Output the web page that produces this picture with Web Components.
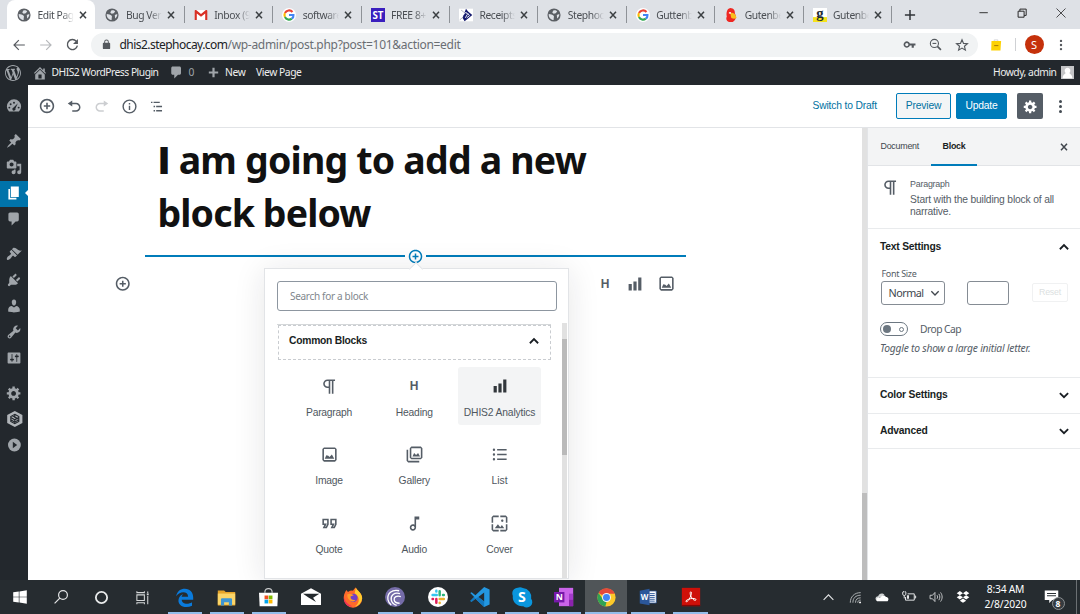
<!DOCTYPE html>
<html lang="en">
<head>
<meta charset="utf-8">
<title>Edit Page</title>
<style>
html,body{margin:0;height:100%;overflow:hidden;background:#fff}
body{font-family:"Noto Sans","Open Sans",sans-serif}
</style>
</head>
<body>
<desktop-screen></desktop-screen>
<script>
const ICONS = {
  globe:['0 0 20 20','<circle cx="10" cy="10" r="9.4" fill="#5b5f64"/><path fill="#dee1e6" d="M2.500 8.500C5 9 8 9 9.500 11s-1 3 .5 5.500L8 17C5 16 2 13 2.500 8.500zM9 3.500c2.500-.8 4.500.2 5.500 1.500l-2 2.500-3 .8-2-2zM14 10l3.500-1.500c.4 3-1.500 5.500-3 6.500z"/>'],
  gmail:['0 0 20 20','<path fill="#fff" d="M2 3h16v14H2z"/><path fill="#d93025" d="M1 17V4.200C1 3 2.500 2.500 3.500 3.300L10 8.500l6.500-5.200c1-.8 2.500-.3 2.500 1V17h-3V8l-6 4.600L4 8v9z"/>'],
  google:['0 0 20 20','<circle cx="10" cy="10" r="10" fill="#fff"/><g fill="none" stroke-width="3"><path stroke="#ea4335" d="M15 5.700A6.500 6.500 0 0 0 4.200 7.200"/><path stroke="#fbbc05" d="M4.200 7.200a6.500 6.500 0 0 0 0 5.700"/><path stroke="#34a853" d="M4.200 12.900a6.500 6.500 0 0 0 9.800 2.300"/><path stroke="#4285f4" d="M14 15.200c1.800-1.300 2.600-3.300 2.400-5.200H10"/></g>'],
  st:['0 0 20 20','<path fill="#3a1fbe" d="M0 0h20v20H0z"/><text x="10" y="15" font-family="Open Sans" font-weight="700" font-size="14" text-anchor="middle" fill="#fff">ST</text>'],
  receipt:['0 0 20 20','<path fill="#fff" d="M0 1h20v18H0z"/><path fill="#14196e" d="M10 1l3 4 6 5-6 5-5 4-3-5 2-5z"/><path stroke="#fff" stroke-width="1.300" fill="none" d="M6 10l4-4 2 3-3 5M12 7l3 4-4 3"/><path stroke="#99a" d="M1 17l5-4M3 3l4 3"/>'],
  parrot:['0 0 20 20','<path fill="#ee2722" d="M9 0c5 0 7 4 6.500 8 3 5 1 10-3 12H7c-4-2-4.500-5-3-8C3 7 4 1 9 0z"/><path fill="#f9bd1a" d="M9 7c4-1 8 2 9 7-3 3-8 1-8-1z"/><path fill="#fff" d="M7 6h3v2H7z"/>'],
  gg:['0 0 20 20','<path fill="#fff" d="M0 0h20v20H0z"/><path fill="#f5e21c" d="M0 13h20v7H0z"/><text x="10" y="14.500" font-family="Liberation Serif" font-weight="700" font-size="21" text-anchor="middle" fill="#1c2a33">g</text>'],
  x:['0 0 20 20','<path stroke="currentColor" stroke-width="3" d="M4 3.500l12 13M16 3.500L4 16.500"/>'],
  plus:['0 0 20 20','<path stroke="currentColor" stroke-width="2.500" d="M10 1.500v17M1.500 10h17"/>'],
  plusb:['0 0 20 20','<path stroke="currentColor" stroke-width="4" d="M10 1.500v17M1.500 10h17"/>'],
  min:['0 0 20 20','<path stroke="currentColor" stroke-width="1.500" d="M4 9.500h14"/>'],
  restore:['0 0 20 20','<path fill="none" stroke="currentColor" stroke-width="1.600" d="M3.500 7h10v10h-10zM6.500 7V3.500H17V14h-3.500"/>'],
  close:['0 0 20 20','<path stroke="currentColor" stroke-width="1.300" d="M2.500 2.500l15 15M17.500 2.500l-15 15"/>'],
  back:['0 0 24 24','<path fill="currentColor" d="M22 11H5.800l6.600-6.600L11 3l-9 9 9 9 1.400-1.400L5.800 13H22z"/>'],
  fwd:['0 0 24 24','<path fill="currentColor" d="M2 11h16.200l-6.600-6.600L13 3l9 9-9 9-1.400-1.400 6.600-6.600H2z"/>'],
  reload:['0 0 24 24','<path fill="none" stroke="currentColor" stroke-width="2.500" d="M19 6a9.300 9.300 0 1 0 2 8"/><path fill="currentColor" d="M22 2v9h-9z"/>'],
  lock:['0 0 24 24','<path fill="currentColor" d="M18 8h-1V6A5 5 0 0 0 7 6v2H6a2 2 0 0 0-2 2v10c0 1.100.9 2 2 2h12a2 2 0 0 0 2-2V10a2 2 0 0 0-2-2zM9 6a3 3 0 0 1 6 0v2H9z"/>'],
  key:['0 0 24 24','<path fill="currentColor" fill-rule="evenodd" d="M12.700 10a6 6 0 1 0 0 4H16v4h4v-4h3v-4zM7 15a3 3 0 1 1 0-6 3 3 0 0 1 0 6z"/>'],
  zoomout:['0 0 24 24','<g fill="none" stroke="currentColor" stroke-width="2"><circle cx="10" cy="10" r="7.500"/><path d="M15.500 15.500L22 22" stroke-width="3"/><path d="M6.500 10h7"/></g>'],
  star:['0 0 24 24','<path fill="none" stroke="currentColor" stroke-width="2" d="M12 3l2.600 6.200 6.700.6-5.100 4.400 1.600 6.600-5.800-3.500-5.800 3.500 1.600-6.600-5.100-4.400 6.700-.6z"/>'],
  keep:['0 0 20 20','<path fill="none" stroke="#b9bdc2" d="M7 4V1.500h6V4"/><path fill="#fdd204" d="M2.500 3.500h16l-1 15.500H2z"/><path stroke="#a67408" stroke-width="1.600" d="M7 11h7"/>'],
  dots:['0 0 20 20','<g fill="currentColor"><circle cx="10" cy="3.200" r="2"/><circle cx="10" cy="10" r="2"/><circle cx="10" cy="16.800" r="2"/></g>'],
  wp:['0 0 20 20','<path fill="currentColor" d="M20 10c0-5.510-4.490-10-10-10C4.480 0 0 4.490 0 10c0 5.520 4.480 10 10 10 5.510 0 10-4.480 10-10zM7.780 15.370L4.370 6.220c.55-.02 1.170-.08 1.170-.08.5-.06.44-1.130-.06-1.110 0 0-1.450.11-2.370.11-.18 0-.37 0-.58-.01C4.120 2.690 6.870 1.110 10 1.110c2.330 0 4.450.87 6.050 2.340-.68-.11-1.650.39-1.650 1.580 0 .74.45 1.360.9 2.100.35.61.55 1.360.55 2.460 0 1.490-1.400 5-1.400 5l-3.030-8.370c.54-.02.82-.17.82-.17.5-.05.44-1.250-.06-1.220 0 0-1.440.12-2.380.12-.87 0-2.330-.12-2.330-.12-.5-.03-.56 1.200-.06 1.220l.92.08 1.260 3.410zM17.410 10c.24-.64.74-1.870.43-4.250.7 1.290 1.050 2.710 1.050 4.250 0 3.290-1.730 6.240-4.400 7.780.97-2.590 1.940-5.200 2.920-7.780zM6.100 18.090C3.120 16.650 1.110 13.530 1.110 10c0-1.300.23-2.480.72-3.590C3.250 10.300 4.670 14.200 6.100 18.090zm4.030-6.630l2.580 6.980c-.86.29-1.760.45-2.710.45-.79 0-1.570-.11-2.290-.33.81-2.380 1.620-4.740 2.420-7.100z"/>'],
  home:['0 0 20 20','<path fill="currentColor" d="M16 8.500l1.530 1.530-1.060 1.060L10 4.600l-6.470 6.490-1.060-1.060L10 2.500l4 4v-2h2v4zm-6-2.460l6 5.990V18H4v-5.970zM12 17v-5H8v5h4z"/>'],
  comment:['0 0 20 20','<path fill="currentColor" d="M5 2h9c1.100 0 2 .9 2 2v7c0 1.100-.9 2-2 2h-2l-5 5v-5H5c-1.100 0-2-.9-2-2V4c0-1.100.9-2 2-2z"/>'],
  avatar:['0 0 20 20','<path fill="#c3c4c6" d="M0 0h20v20H0z"/><path fill="#fff" d="M10 2.500a4.500 4.800 0 0 1 3 8.300c.3 1.700 4.500 2.200 4.500 8.200h-15c0-6 4.200-6.500 4.500-8.200a4.500 4.800 0 0 1 3-8.300z"/>'],
  dashboard:['0 0 20 20','<path fill="currentColor" d="M3.800 17h12.400A8.900 8.900 0 1 0 3.800 17z"/><g fill="#23282d"><circle cx="10" cy="6" r="1.200"/><circle cx="5.800" cy="7.800" r="1.200"/><circle cx="4.200" cy="12" r="1.200"/><circle cx="15.800" cy="12" r="1.200"/><path d="M14.800 6.500l-3 6.600a2 2 0 1 1-2.300-1.200z"/></g>'],
  pin:['0 0 20 20','<path fill="currentColor" d="M10.440 3.020l1.820-1.820 6.360 6.350-1.830 1.820c-1.050-.68-2.480-.57-3.410.36l-.75.75c-.92.93-1.040 2.350-.35 3.410l-1.830 1.820-2.410-2.410-2.800 2.790c-.42.42-3.380 2.710-3.800 2.290s1.860-3.390 2.280-3.810l2.790-2.790L4.100 9.360l1.830-1.820c1.050.69 2.480.57 3.400-.36l.75-.75c.93-.92 1.050-2.350.36-3.410z"/>'],
  media:['0 0 20 20','<path fill="currentColor" d="M13 11V4c0-.55-.45-1-1-1h-1.670L9 1H5L3.670 3H2c-.55 0-1 .45-1 1v7c0 .55.45 1 1 1h10c.55 0 1-.45 1-1zM7 4.500c1.380 0 2.500 1.120 2.500 2.500S8.380 9.500 7 9.500 4.500 8.380 4.500 7 5.620 4.500 7 4.500zM14 6h5v10.500c0 1.380-1.120 2.500-2.500 2.500S14 17.880 14 16.500s1.120-2.500 2.500-2.500c.17 0 .34.02.5.05V9h-3V6zm-4 8.050V13h2v3.500c0 1.380-1.120 2.500-2.500 2.500S7 17.880 7 16.500 8.120 14 9.500 14c.17 0 .34.02.5.05z"/>'],
  page:['0 0 20 20','<path fill="currentColor" d="M6 15V2h10v13H6zm-1 1h8v2H3V5h2v11z"/>'],
  brush:['0 0 20 20','<path fill="currentColor" d="M14.480 11.060L7.410 3.990l1.500-1.500c.5-.56 2.300-.47 3.510.32 1.210.8 1.430 1.280 2.910 2.100 1.180.64 2.450 1.260 4.450.85zm-.71.71L6.700 4.700 4.930 6.470c-.39.39-.39 1.020 0 1.410l1.060 1.060c.39.39.39 1.030 0 1.420-.6.6-1.430 1.110-2.210 1.690-.35.26-.7.53-1.010.84C1.430 14.230.4 16.080 1.400 17.070c.99 1 2.840-.03 4.180-1.360.31-.31.58-.66.85-1.020.57-.78 1.080-1.610 1.690-2.210.39-.39 1.020-.39 1.410 0l1.060 1.060c.39.39 1.020.39 1.410 0z"/>'],
  plug:['0 0 20 20','<path fill="currentColor" d="M13.110 4.360L9.870 7.600 8 5.730l3.240-3.240c.35-.34 1.050-.2 1.560.32.52.51.66 1.210.31 1.550zm-8 1.770l.91-1.120 9.010 9.010-1.190.84c-.71.71-2.630 1.160-3.820 1.160H6.140L4.900 17.260c-.59.59-1.540.59-2.120 0-.59-.58-.59-1.530 0-2.120l1.240-1.240v-3.880c0-1.130.4-3.190 1.090-3.890zm7.260 3.970l3.240-3.240c.34-.35 1.040-.21 1.550.31.52.51.66 1.210.31 1.550l-3.240 3.250z"/>'],
  user:['0 0 20 20','<path fill="currentColor" d="M10 9.250c-2.270 0-2.730-3.440-2.730-3.440C7 4.020 7.820 2 9.970 2c2.160 0 2.980 2.020 2.710 3.810 0 0-.41 3.440-2.680 3.440zm0 2.570L12.720 10c2.390 0 4.520 2.330 4.520 4.530v2.490s-3.650 1.130-7.240 1.130c-3.650 0-7.240-1.130-7.240-1.130v-2.490c0-2.250 1.940-4.480 4.470-4.480z"/>'],
  wrench:['0 0 20 20','<path fill="currentColor" d="M16.680 9.770c-1.340 1.340-3.300 1.670-4.950.99l-5.410 6.520c-.99.99-2.590.99-3.580 0s-.99-2.590 0-3.570l6.520-5.420c-.68-1.650-.35-3.610.99-4.950 1.280-1.280 3.120-1.620 4.720-1.060l-2.890 2.890 2.820 2.820 2.860-2.870c.53 1.580.18 3.390-1.080 4.650zM3.810 16.210c.4.39 1.040.39 1.430 0 .4-.4.4-1.040 0-1.430-.39-.4-1.030-.4-1.430 0-.39.39-.39 1.030 0 1.430z"/>'],
  sliders:['0 0 20 20','<path fill="currentColor" d="M18 16V4c0-.55-.45-1-1-1H3c-.55 0-1 .45-1 1v12c0 .55.45 1 1 1h14c.55 0 1-.45 1-1zM8 11h1c.55 0 1 .45 1 1s-.45 1-1 1H8v1.500c0 .28-.22.5-.5.5s-.5-.22-.5-.5V13H6c-.55 0-1-.45-1-1s.45-1 1-1h1V5.500c0-.28.22-.5.5-.5s.5.22.5.5V11zm5-2h-1c-.55 0-1-.45-1-1s.45-1 1-1h1V5.500c0-.28.22-.5.5-.5s.5.22.5.5V7h1c.55 0 1 .45 1 1s-.45 1-1 1h-1v5.500c0 .28-.22.5-.5.5s-.5-.22-.5-.5V9z"/>'],
  gear:['0 0 20 20','<path fill="currentColor" d="M18 12h-2.180c-.17.7-.44 1.350-.81 1.930l1.540 1.540-2.100 2.100-1.540-1.540c-.58.36-1.230.63-1.910.79V19H8v-2.180c-.68-.16-1.330-.43-1.910-.79l-1.540 1.540-2.120-2.120 1.540-1.540c-.36-.58-.63-1.230-.79-1.910H1V9.030h2.170c.16-.7.44-1.350.8-1.940L2.430 5.550l2.100-2.100 1.540 1.540c.58-.37 1.240-.64 1.930-.81V2h3v2.180c.68.16 1.330.43 1.910.79l1.540-1.540 2.120 2.120-1.540 1.540c.36.59.64 1.240.8 1.940H18V12zm-8.500 1.500c1.660 0 3-1.340 3-3s-1.340-3-3-3-3 1.340-3 3 1.340 3 3 3z"/>'],
  hex:['0 0 20 20','<path fill="#b1b5b9" d="M11 0l9.500 5v10L11 20l-9.500-5V5z"/><path fill="none" stroke="#23282d" stroke-width="1.400" d="M11 4.200l5 2.800v6l-5 2.800L6 13V7zM6 8l5 3 5-3M6 11l5 3 5-3M11 4v4l4 2M8 6l6 3M11 11v4"/>'],
  play:['0 0 20 20','<circle cx="10.500" cy="10" r="8" fill="currentColor"/><path fill="#23282d" d="M8.500 6L14 10l-5.500 4z"/>'],
  insert:['0 0 20 20','<path fill="currentColor" d="M10 1c-5 0-9 4-9 9s4 9 9 9 9-4 9-9-4-9-9-9zm0 16c-3.900 0-7-3.100-7-7s3.100-7 7-7 7 3.100 7 7-3.100 7-7 7zm1-11H9v3H6v2h3v3h2v-3h3V9h-3V6z"/>'],
  undo:['0 0 20 20','<path fill="currentColor" d="M12 5H7V2L1 6l6 4V7h5c2.200 0 4 1.800 4 4s-1.800 4-4 4H7v2h5c3.300 0 6-2.700 6-6s-2.700-6-6-6z"/>'],
  redo:['0 0 20 20','<path fill="currentColor" d="M8 5h5V2l6 4-6 4V7H8c-2.200 0-4 1.800-4 4s1.800 4 4 4h5v2H8c-3.300 0-6-2.700-6-6s2.700-6 6-6z"/>'],
  info:['0 0 24 24','<path fill="currentColor" d="M12 2a10 10 0 1 0 0 20 10 10 0 0 0 0-20zm0 18a8 8 0 1 1 0-16 8 8 0 0 1 0 16zm-1-9h2v6h-2zm0-4h2v2h-2z"/>'],
  outline:['0 0 20 20','<path fill="currentColor" d="M1.500 2.500h2.300v2.200H1.500zm4 0H15v2.200H5.500zM5.500 9h2.300v2.200H5.500zm4 0h9v2.200h-9zM5.500 15.500h2.300v2.200H5.500zm4 0h9v2.200h-9z"/>'],
  para:['0 0 24 24','<path fill="currentColor" d="M11 5v7H9.500C7.600 12 6 10.400 6 8.500S7.600 5 9.500 5H11m8-2H9.500C6.500 3 4 5.500 4 8.500S6.500 14 9.500 14H11v7h2V5h2v16h2V5h2V3z"/>'],
  heading:['0 0 20 20','<text x="10" y="15.300" font-family="Liberation Sans" font-weight="700" font-size="15" text-anchor="middle" fill="currentColor">H</text>'],
  bars:['0 0 20 20','<path fill="currentColor" d="M18 18V2h-4v16h4zm-6 0V7H8v11h4zm-6 0v-8H2v8h4z"/>'],
  image:['0 0 24 24','<path fill="currentColor" d="M19 3H5L3 5v14l2 2h14l2-2V5l-2-2zm0 16H5V5h14v14zM8 13l-2 4.500h12l-3-5.500-3 3-1.500-1.500z" fill-rule="evenodd"/>'],
  gallery:['0 0 24 24','<path fill="currentColor" d="M20 4v12H8V4h12m0-2H8L6 4v12l2 2h12l2-2V4l-2-2zm-8.500 8l-2 4.500h9.500l-2.500-4.500-2.500 2.500zM2 6v14l2 2h14v-2H4V6H2z"/>'],
  list:['0 0 24 24','<path fill="currentColor" d="M9 19h12v-2H9v2zm0-6h12v-2H9v2zm0-8v2h12V5H9zM5 4.500a1.500 1.500 0 1 0 0 3 1.500 1.500 0 0 0 0-3zm0 6a1.500 1.500 0 1 0 0 3 1.500 1.500 0 0 0 0-3zm0 6a1.500 1.500 0 1 0 0 3 1.500 1.500 0 0 0 0-3z"/>'],
  quote:['0 0 24 24','<path fill="currentColor" d="M18.620 18h-5.240l2-4H13V6h8v7.240L18.620 18zm-2-2h.76L19 12.760V8h-4v4h3.620l-2 4zm-8 2H3.380l2-4H3V6h8v7.240L8.620 18zm-2-2h.76L9 12.760V8H5v4h3.620l-2 4z"/>'],
  audio:['0 0 24 24','<path fill="currentColor" d="M12 3l.01 10.550c-.59-.34-1.270-.55-2-.55C7.790 13 6 14.790 6 17s1.790 4 4.010 4S14 19.210 14 17V7h4V3h-6zm-1.990 16c-1.100 0-2-.9-2-2s.9-2 2-2 2 .9 2 2-.9 2-2 2z"/>'],
  cover:['0 0 24 24','<path fill="currentColor" d="M4 4h7V2H4L2 4v7h2V4zm6 9l-4 5h12l-3-4-2.030 2.710L10 13zm7-4.500c0-.83-.67-1.500-1.500-1.500S14 7.670 14 8.500s.67 1.500 1.500 1.500S17 9.330 17 8.500zM20 2h-7v2h7v7h2V4l-2-2zm0 18h-7v2h7l2-2v-7h-2v7zM4 13H2v7l2 2h7v-2H4v-7z"/>'],
  up:['0 0 24 24','<path fill="none" stroke="currentColor" stroke-width="2.400" d="M6.500 15l5.500-5.500 5.500 5.500"/>'],
  down:['0 0 24 24','<path fill="none" stroke="currentColor" stroke-width="2.400" d="M6.500 9.500L12 15l5.500-5.500"/>'],
  thin:['0 0 24 24','<path fill="none" stroke="currentColor" stroke-width="2" d="M6.500 9.500L12 15l5.500-5.500"/>'],
  windows:['0 0 20 20','<path fill="#fff" d="M1.500 4.200l7-1v6.400h-7zM9.300 3L18.500 1.700v7.900H9.300zM1.500 10.400h7v6.400l-7-1zM9.300 10.400h9.200v7.900L9.300 17z"/>'],
  search:['0 0 20 20','<g fill="none" stroke="#e4e6e7" stroke-width="1.500"><circle cx="12.500" cy="7.500" r="5.500"/><path d="M8.500 11.500L2 18"/></g>'],
  cortana:['0 0 20 20','<circle cx="10" cy="10" r="7.500" fill="none" stroke="#e9ebeb" stroke-width="2.400"/>'],
  taskview:['0 0 20 20','<g fill="none" stroke="#d4d7d8" stroke-width="1.400"><path d="M2.500 6.500h10v7.500h-10zM2.500 1.500v2h10v-2M2.500 19v-2h10v2M17 2v2M17 8v11"/><path stroke-width="2.500" d="M17 4.500v2.500"/></g>'],
  edge:['0 0 24 24','<path fill="#0a7bdc" d="M1.500 10.500C2.500 4 7 1 12.500 1 19 1 23 6 23 12v2.800H8.500c.3 6 8.500 6.200 13 3.200v4.500C12 27 1.500 21.500 5 12.500 6 10 8 8.500 10.500 7.800 9 9 8.500 10 8.400 11h8.200c0-7-10.500-7.500-15.100-.5z"/>'],
  explorer:['0 0 24 24','<path fill="#e6a52a" d="M1 3h8l2 2h12v17H1z"/><path fill="#fbd568" d="M1 7h22v14H1z"/><path fill="#3e96d4" d="M5 22v-8l1-1h12l1 1v8h-4v-4H9v4z"/>'],
  store:['0 0 24 24','<path fill="none" stroke="#c8cacb" stroke-width="1.500" d="M7.500 6V4.500A4 4 0 0 1 12 .8a4 4 0 0 1 4.500 3.700V6"/><path fill="#fff" d="M0 6h24l-.8 17H.8z"/><path fill="#f25022" d="M7 9.500h4.700v4.700H7z"/><path fill="#7fba00" d="M12.300 9.500H17v4.700h-4.700z"/><path fill="#00a4ef" d="M7 14.800h4.700v4.700H7z"/><path fill="#ffb900" d="M12.300 14.800H17v4.700h-4.700z"/>'],
  mail:['0 0 24 24','<path fill="#fff" d="M0 8l12-6.500L24 8v13.500H0z"/><path fill="#23292d" d="M2.500 8H22l-7.500 5 3.500 5L9 12.500z"/>'],
  firefox:['0 0 24 24','<path fill="#ff6a2b" d="M1 12C1 8 3 5.500 4 3.500L6 6c2-1.500 4-2 6-1.500 1-2 2.500-3.500 3.500-4 1 4 7.500 6 7.500 13A11 11 0 0 1 1 14z"/><path fill="#ffcb2e" d="M15.500.5c1 4 7.500 6 7.500 13a11 11 0 0 1-9 10c8-5 5-13 0-16z"/><path fill="#f2305a" d="M1 10c0 6 4 11 10 13-6 2-10-5-10-9z"/><circle cx="12.500" cy="13" r="5" fill="#7040c8"/><path fill="#ff9b2a" d="M5 9c3-2 6-.5 8 1l-4 1.500c0 4 3 4.500 6 4-3 4-10 1-10-6.500z"/>'],
  bt:['0 0 24 24','<circle cx="12" cy="12" r="12" fill="#756ca8"/><g fill="none" stroke="#fff" stroke-width="1.600"><path d="M17 4.500C8 2.500 2.500 8 3.500 15c.5 3 2 5 4 6.500"/><path d="M18 8C11 6 6.500 10 7.500 15.500c.6 3 3 5.500 6.500 6.500"/><path d="M19 11.500c-5-1.500-8.500.5-8 4 .4 2.500 3 4 6.500 4"/></g>'],
  slack:['0 0 24 24','<circle cx="12" cy="12" r="12" fill="#fff"/><g stroke-width="3" stroke-linecap="round"><path stroke="#36c5f0" d="M5.500 9.500h5M10 4.500v1"/><path stroke="#2eb67d" d="M14 5v5M19 9.500h-1"/><path stroke="#ecb22e" d="M14 14.500h5M14 19v.2"/><path stroke="#e01e5a" d="M10 14.500v4.500M5.500 14.500h.5"/></g>'],
  vscode:['0 0 24 24','<path fill="#2397e0" d="M17 0l6.500 3v18L17 24 6.500 14.200 2 17.700l-1.700-1L5 12 .3 7.300l1.700-1 4.500 3.500zM17 6.500L10 12l7 5.500z" fill-rule="evenodd"/><path fill="#1277be" d="M17 17.500V24l-10.500-9.800L10 12zM.3 16.700L5 12l1.500 2.200L2 17.700z"/>'],
  skype:['0 0 24 24','<path fill="#0a96dd" d="M7 .8A7 7 0 0 1 13 1.200a11 11 0 0 1 10 13A6.500 6.500 0 0 1 13.500 23 11 11 0 0 1 1 10.500 6.800 6.800 0 0 1 7 .8z"/><text x="12" y="17.800" font-family="Open Sans" font-size="17" font-weight="700" text-anchor="middle" fill="#fff">S</text>'],
  onenote:['0 0 24 24','<path fill="#ca64ea" d="M6 1h17v22H6z"/><path fill="#a33bcb" d="M18 8h5v7h-5z"/><path fill="#8b22ad" d="M18 15h5v8h-5z"/><path fill="#7719aa" d="M0 6h12.500v12.500H0z"/><text x="6.300" y="16" font-family="Open Sans" font-size="10.500" font-weight="700" text-anchor="middle" fill="#fff">N</text>'],
  chrome:['0 0 24 24','<circle cx="12" cy="12" r="11.500" fill="#fdc929"/><path fill="#e5493a" d="M12 12L2 6.200A11.500 11.500 0 0 1 22.500 7.200H12z"/><path fill="#31a355" d="M2 6.200L8 15l4 3-1.500 5.400A11.500 11.500 0 0 1 2 6.200z"/><circle cx="12" cy="12" r="5.600" fill="#f5f7f9"/><circle cx="12" cy="12" r="4.400" fill="#4285f4"/>'],
  word:['0 0 24 24','<path fill="#fff" stroke="#2b579a" d="M13 4h10v16H13z"/><path stroke="#2b579a" stroke-width="1.300" d="M14 7.500h7M14 10h7M14 12.500h7M14 15h7M14 17.500h7"/><path fill="#2b579a" d="M1 3.500L14 1v22L1 20.500z"/><text x="7.500" y="16" font-family="Open Sans" font-size="10.500" font-weight="700" text-anchor="middle" fill="#fff">W</text>'],
  acrobat:['0 0 24 24','<path fill="#ce1009" d="M1 1h22v22H1z"/><path fill="#7e0705" d="M1 21.500h22V23H1z"/><path fill="none" stroke="#fff" stroke-width="1.200" d="M6 17.500c-1.500-1 4-3.800 8-3.800 3.500 0 5 1.500 3.500 2.200-2.500.8-6.500-4.400-6.500-8.400 0-2.500 1.700-2.200 1.500 0-.4 4-4.500 11.500-6.500 10z"/>'],
  trayup:['0 0 20 20','<path fill="none" stroke="#e4e6e7" stroke-width="1.700" d="M2.500 13.500L10 6l7.500 7.500"/>'],
  wifi:['0 0 20 20','<g fill="none" stroke="#aeb2b4" stroke-width="1.500"><path d="M2 18C2 9 8 2.500 18 2.500M6 18C6 11 10 6.500 18 6.500M10 18c0-5 3-7.500 8-7.500M13.500 18c0-2.500 1.500-4 4.500-4"/></g><circle cx="17" cy="17.500" r="1.500" fill="#fff"/>'],
  cloud:['0 0 20 20','<path fill="#cfd2d3" d="M1 14c-1-3 1-5 3.500-5C5.500 4.500 11 3.500 13.500 7z"/><path fill="#fff" d="M3 16c-2-1-2-3.500.5-4.500 2-.7 3 .3 4.500-1.500C10 7.500 14 7 15.500 10c3.500 0 5 3.500 2.500 6z"/>'],
  battery:['0 0 20 20','<g fill="none" stroke="#e4e6e7" stroke-width="1.400"><path d="M8 5.500h9.500v9H5V10M18 8.500h1.500v3H18"/><path d="M1 3v3c0 2.500 4.500 2.500 4.500 0V3M3.200 8v4M2 1.500v2M4.500 1.500v2"/></g><path fill="#e4e6e7" d="M7 7.500h3v5H7z"/>'],
  volume:['0 0 20 20','<g fill="none" stroke="#cfd2d3" stroke-width="1.300"><path d="M1.500 7.500H5l3.500-4v13L5 12.500H1.500zM11.500 7.500c1 1.500 1 3.500 0 5M14 5.500c2 3 2 6 0 9M16.500 3.500c3 4 3 9 0 13"/></g>'],
  dropbox:['0 0 20 20','<path fill="#fff" d="M5.500 1.500l4.500 3-4.500 3-4.500-3zM14.500 1.500l4.500 3-4.500 3-4.500-3zM5.500 7.500l4.500 3-4.500 3-4.500-3zM14.500 7.500l4.500 3-4.500 3-4.500-3zM10 12.300l4.500 3-4.500 3-4.500-3z"/>'],
  note:['0 0 20 20','<path fill="#fff" d="M1 2h18v12.500H11L7 18.500v-4H1z"/><path stroke="#262c30" stroke-width="1.300" d="M4 6h12M4 9h12"/>']
};

function define(name, css, html = '<slot></slot>', ready) {
  const tpl = document.createElement('template');
  tpl.innerHTML = `<style>:host{display:block;box-sizing:border-box}*{box-sizing:border-box}.i{display:flex;flex:none}${css}</style>${html}`;
  customElements.define(name, class extends HTMLElement {
    connectedCallback() {
      if (this.shadowRoot) return;
      this.attachShadow({mode:'open'}).append(tpl.content.cloneNode(true));
      if (ready) ready(this, this.shadowRoot);
    }
  });
}

/* Fills the `.i` holder of an element with the icon that its attributes name. */
function putIcon(el, root, size) {
  root.querySelector('.i').innerHTML = `<ui-icon name="${el.getAttribute('icon')}" size="${el.getAttribute('size') || size}"></ui-icon>`;
}

/* An icon from the set, `size` pixels square. */
define('ui-icon', ':host{display:block;flex:none;line-height:0}svg{display:block;overflow:visible}', '<svg></svg>', (el, root) => {
  const [box, body] = ICONS[el.getAttribute('name')], s = el.getAttribute('size') || 16, svg = root.querySelector('svg');
  svg.setAttribute('viewBox', box); svg.setAttribute('width', s); svg.setAttribute('height', s); svg.innerHTML = body;
});

/* One line of text, spaced so that it fills `w` pixels. */
define('ui-text', ':host{flex:none;white-space:nowrap;width:max-content}span{display:inline-block}', '<span><slot></slot></span>', (el, root) => {
  const w = parseFloat(el.getAttribute('w')), n = el.textContent.length;
  if (!w) return;
  const now = root.querySelector('span').getBoundingClientRect().width;
  el.style.letterSpacing = ((w - now) / n).toFixed(3) + 'px';
});

/* Browser chrome */
define('browser-tab', `
 :host{display:flex;align-items:center;width:88.4px;height:29px;padding-left:10px;position:relative;flex:none;color:#4a4e53}
 :host([sep])::before{content:"";position:absolute;left:0;top:6px;width:1px;height:17px;background:#8e9297}
 :host([active]){background:#fff;border-radius:8px 8px 0 0}
 .t{width:36px;margin-left:6.500px;font-size:10.300px;letter-spacing:-.4px;line-height:28px;overflow:hidden;-webkit-mask:linear-gradient(90deg,#000 65%,transparent);mask:linear-gradient(90deg,#000 65%,transparent)}
 .x{margin-left:4px;color:#3c4043}`,
 '<div class="i"></div><div class="t"><ui-text><slot></slot></ui-text></div><ui-icon class="x" name="x" size="10"></ui-icon>',
 (el, root) => putIcon(el, root, 14));

define('tab-strip', `
 :host{display:flex;align-items:center;height:29px;background:#dee1e6;padding-left:7px}
 .end{width:1px;height:17px;background:#8e9297;flex:none}
 .add{margin-left:12px;color:#303338}
 .win{margin-left:auto;display:flex;align-items:center;gap:27px;padding:0 13px 4px 0;color:#222}`,
 `<browser-tab icon="globe" active>Edit Page</browser-tab><browser-tab icon="globe">Bug Verify</browser-tab>
 <browser-tab icon="gmail" sep>Inbox (9)</browser-tab><browser-tab icon="google" sep>software</browser-tab>
 <browser-tab icon="st" sep>FREE 8+ t</browser-tab><browser-tab icon="receipt" sep>Receipts</browser-tab>
 <browser-tab icon="globe" sep>Stephocay</browser-tab><browser-tab icon="google" sep>Guttenberg</browser-tab>
 <browser-tab icon="parrot" sep>Gutenberg</browser-tab><browser-tab icon="gg" sep>Gutenberg</browser-tab>
 <div class="end"></div><ui-icon class="add" name="plus" size="12"></ui-icon>
 <div class="win"><ui-icon name="min" size="12"></ui-icon><ui-icon name="restore" size="12"></ui-icon><ui-icon name="close" size="12"></ui-icon></div>`);

define('address-bar', `
 :host{display:flex;align-items:center;height:31px;background:#fff;padding:0 11px 0 11.500px;color:#55595e}
 .f{color:#b6b8bb}
 .pill{display:flex;align-items:center;width:887px;height:24px;margin-left:12px;border-radius:12px;background:#f1f3f4;padding:0 9px 0 9.500px}
 .url{display:flex;margin-left:8px;font-size:12px;line-height:24px;color:#202124}.p{color:#6a6e73}
 .r{margin-left:auto;display:flex;gap:13px;align-items:center}
 .bar{width:1px;height:13px;background:#cfd1d4;margin:0 9.500px 0 12.500px}
 .me{width:19px;height:19px;border-radius:50%;background:#c5310b;color:#fff;font:11px/19px "Noto Sans",sans-serif;text-align:center}`,
 `<ui-icon name="back" size="14"></ui-icon><ui-icon class="f" name="fwd" size="14" style="margin-left:13.500px"></ui-icon><ui-icon name="reload" size="13" style="margin-left:13px"></ui-icon>
 <div class="pill"><ui-icon name="lock" size="11"></ui-icon><div class="url"><ui-text w="108">dhis2.stephocay.com</ui-text><ui-text class="p" w="233">/wp-admin/post.php?post=101&amp;action=edit</ui-text></div>
 <div class="r"><ui-icon name="key" size="13"></ui-icon><ui-icon name="zoomout" size="13"></ui-icon><ui-icon name="star" size="14"></ui-icon></div></div>
 <ui-icon name="keep" size="12" style="margin-left:12px"></ui-icon><div class="bar"></div><div class="me" style="margin-left:-.5px">S</div><ui-icon name="dots" size="12" style="margin-left:11px"></ui-icon>`);

/* WordPress admin */
define('admin-bar', `
 :host{display:flex;align-items:center;height:25px;background:#23282d;color:#eee;padding:0 6.500px 0 5px;font-size:10.300px;line-height:25.500px}
 ui-icon{color:#a0a5aa}.me{margin-left:auto}`,
 `<ui-icon name="wp" size="16"></ui-icon><ui-icon name="home" size="16" style="margin-left:10.500px"></ui-icon><ui-text w="107" style="margin-left:4px">DHIS2 WordPress Plugin</ui-text>
 <ui-icon name="comment" size="15" style="margin-left:11px"></ui-icon><ui-text w="6" style="margin-left:4px;color:#a0a5aa">0</ui-text>
 <ui-icon name="plusb" size="11" style="margin-left:13.500px"></ui-icon><ui-text w="20.500" style="margin-left:6px">New</ui-text><ui-text w="45.500" style="margin-left:10.500px">View Page</ui-text>
 <ui-text class="me" w="63.500">Howdy, admin</ui-text><ui-icon name="avatar" size="13" style="margin-left:4px"></ui-icon>`);

define('side-item', `
 :host{display:flex;align-items:center;height:26px;padding-left:5.500px;color:#a0a5aa;position:relative}
 :host([gap]){margin-top:9px}
 :host([on]){background:#0073aa;color:#fff}
 :host([on])::after{content:"";position:absolute;right:0;top:9.500px;border:3.500px solid transparent;border-left:0;border-right-color:#fff}
 .i{margin-top:-1px}`,
 '<div class="i"></div>', (el, root) => putIcon(el, root, 16));

define('admin-menu', ':host{width:27.500px;background:#23282d;padding-top:8.500px;flex:none}',
 `<side-item icon="dashboard"></side-item><side-item icon="pin" gap></side-item><side-item icon="media"></side-item><side-item icon="page" on></side-item><side-item icon="comment"></side-item>
 <side-item icon="brush" gap></side-item><side-item icon="plug"></side-item><side-item icon="user"></side-item><side-item icon="wrench"></side-item><side-item icon="sliders"></side-item>
 <side-item icon="gear" gap></side-item><side-item icon="hex"></side-item><side-item icon="play" size="16"></side-item>`);

define('editor-header', `
 :host{display:flex;align-items:center;height:43px;border-bottom:1px solid #e2e4e7;padding:0 12.500px 0 11.500px;color:#555d66;font:10.300px/24px "Liberation Sans",sans-serif;background:#fff}
 .l{display:flex;align-items:center;gap:12px}
 .r{margin-left:auto;display:flex;align-items:center}
 .b{height:26px;border-radius:2px;display:flex;justify-content:center;border:1px solid #007cba;color:#0071a1;background:#f3f5f6}
 .u{background:#007cba;color:#fff;margin-left:5px}
 .g{width:26px;height:26px;border-radius:2px;background:#555d66;color:#fff;display:flex;align-items:center;justify-content:center;margin-left:10px}`,
 `<div class="l"><ui-icon name="insert" size="16"></ui-icon><ui-icon name="undo" size="15"></ui-icon><ui-icon name="redo" size="15" style="color:#ccced1"></ui-icon><ui-icon name="info" size="17"></ui-icon><ui-icon name="outline" size="13"></ui-icon></div>
 <div class="r"><ui-text w="64.500" style="color:#0071a1;margin-right:19px">Switch to Draft</ui-text><div class="b" style="width:55px"><ui-text w="35.500">Preview</ui-text></div><div class="b u" style="width:51px"><ui-text w="32">Update</ui-text></div>
 <div class="g"><ui-icon name="gear" size="15"></ui-icon></div><ui-icon name="dots" size="15" style="margin-left:9.500px;color:#444b53"></ui-icon></div>`);

define('block-tile', `
 :host{display:flex;flex-direction:column;align-items:center;height:58px;width:83px;border-radius:3px;padding-top:10px;color:#555d66}
 :host([on]){background:#f3f4f5;color:#32373c}
 ui-text{font:10.300px/14px "Liberation Sans",sans-serif;margin-top:10.200px;color:#4f5760}
 .i{height:19px;display:flex;align-items:center}`,
 '<div class="i"></div><ui-text><slot></slot></ui-text>', (el, root) => {
  putIcon(el, root, 19);
  const t = root.querySelector('ui-text'); t.style.letterSpacing = ((el.getAttribute('w') - t.getBoundingClientRect().width) / el.textContent.length).toFixed(3) + 'px';
 });

define('block-inserter', `
 :host{display:flex;flex-direction:column;width:305px;height:311px;background:#fff;border:1px solid #e2e4e7;box-shadow:0 3px 30px rgba(25,30,35,.11);padding:12px 1px 0 12px;position:relative}
 .tip{position:absolute;left:145.500px;top:-5.500px;width:10px;height:10px;background:#fff;border:1px solid #e2e4e7;border-right:0;border-bottom:0;transform:rotate(45deg)}
 .s{width:280px;height:30px;border:1px solid #8d96a0;border-radius:3px;padding-left:12px;font-size:10px;line-height:29.500px;color:#81878d;flex:none}
 .body{display:flex;margin-top:11.500px;flex:1;min-height:0}
 .main{width:285.500px;overflow:hidden}
 .rule{width:274px;height:1px;background:#d5d8da;margin:1px 0 .5px 0}
 .h{width:273px;height:35px;margin-left:1px;border:1px dashed #c9ccd0;display:flex;align-items:center;justify-content:space-between;padding:0 7px 2.500px 10px;color:#191e23;font:bold 10.300px/14px "Liberation Sans",sans-serif}
 .grid{display:grid;grid-template-columns:repeat(3,83px);gap:10.500px 2.300px;margin:6.500px 0 0 10.500px}
 .bar{width:5px;background:#e1e1e1;height:255px;padding-top:16px}.bar i{display:block;height:116px;background:#bababa}`,
 `<div class="tip"></div><div class="s"><ui-text w="78">Search for a block</ui-text></div>
 <div class="body"><div class="main"><div class="rule"></div><div class="h"><ui-text w="78">Common Blocks</ui-text><ui-icon name="up" size="18"></ui-icon></div>
 <div class="grid"><block-tile icon="para" w="46">Paragraph</block-tile><block-tile icon="heading" size="16" w="37">Heading</block-tile><block-tile icon="bars" size="16" w="71.500" on>DHIS2 Analytics</block-tile>
 <block-tile icon="image" w="27.500">Image</block-tile><block-tile icon="gallery" w="31.500">Gallery</block-tile><block-tile icon="list" w="16">List</block-tile>
 <block-tile icon="quote" w="27">Quote</block-tile><block-tile icon="audio" w="25.500">Audio</block-tile><block-tile icon="cover" w="26.500">Cover</block-tile></div></div><div class="bar"><i></i></div></div>`);

define('editor-canvas', `
 :host{flex:1;min-width:0;background:#fff;display:flex;overflow:hidden;height:452px}
 .c{flex:1;position:relative;padding:6px 0 0 117.500px}
 h1{margin:0 0 0 12.500px;font:700 37.500px/52.500px "Noto Sans",sans-serif;color:#111;height:105px}
 h1 ui-text{height:52.500px}
 h1 b{font-family:"Open Sans",sans-serif;line-height:1}
 .ins{display:flex;align-items:center;gap:3px;width:541px;margin-top:9px;color:#007cba;height:16px}
 .ins i{height:2px;background:#007cba;flex:1}
 .row{display:flex;align-items:center;margin:11.500px 0 0 -30px;color:#555d66;height:16px}
 .q{display:flex;align-items:center;gap:14px;margin-left:466px}
 block-inserter{position:absolute;left:236.500px;top:140px}
 .bar{width:5.500px;background:#e1e1e1;padding-top:365px}.bar b{display:block;height:87px;background:#bdbdbd}`,
 `<div class="c"><h1><ui-text w="428.500"><b>I</b> am going to add a new</ui-text><ui-text w="213">block below</ui-text></h1>
 <div class="ins"><i></i><ui-icon name="insert" size="15"></ui-icon><i></i></div>
 <div class="row"><ui-icon name="insert" size="15.500"></ui-icon><div class="q"><ui-icon name="heading" size="16"></ui-icon><ui-icon name="bars" size="16"></ui-icon><ui-icon name="image" size="19"></ui-icon></div></div>
 <block-inserter></block-inserter></div><div class="bar"><b></b></div>`);

define('panel-head', `
 :host{display:flex;align-items:center;justify-content:space-between;height:36px;border-top:1px solid #e9ebed;padding:0 7.500px 0 12px;color:#191e23;font:bold 10.300px/14px "Liberation Sans",sans-serif}`,
 '<slot></slot>');

define('block-settings', `
 :host{width:213px;height:452px;background:#fff;flex:none;color:#555d66;font:10.300px/12px "Liberation Sans",sans-serif;border-left:.5px solid #e2e4e7}
 .tabs{height:38px;background:#f3f4f5;border-bottom:1px solid #e2e4e7;display:flex;line-height:37.500px;padding:0 7.500px 0 12.500px;align-items:stretch;color:#40464d}
 .on{border-bottom:2px solid #007cba;padding:0 11.500px;margin:0 0 -1px 12px;color:#191e23;font-weight:bold}
 .x{margin-left:auto;align-self:center}
 .card{display:flex;height:62px;padding:12px 0 0 12.500px}.card div{margin-left:10.500px}
 .f{display:flex;align-items:center;margin-left:12.500px}
 .sel{width:64.500px;height:24px;border:1px solid #858c94;border-radius:3px;display:flex;align-items:center;justify-content:space-between;padding:0 1px 0 7px;font:10.800px/22px "Noto Sans",sans-serif;color:#40464d}
 .in{width:42px;height:24px;border:1px solid #858c94;border-radius:3px;margin-left:22px}
 .re{width:36px;height:19px;border:1px solid #f0f1f2;border-radius:2px;margin-left:23px;color:#dcdfe1;font-size:8.800px;line-height:16px;display:flex;justify-content:center}
 .tg{width:28px;height:14px;border:1.500px solid #6c7781;border-radius:7px;display:flex;align-items:center;justify-content:space-between;padding:0 3px 0 1.500px}
 .tg i{width:8px;height:8px;border-radius:50%;background:#6c7781}.tg b{width:5px;height:5px;border:1px solid #6c7781;border-radius:50%}
 .os{font:10.300px/14px "Noto Sans",sans-serif;color:#555d66}`,
 `<div class="tabs"><ui-text w="38.500" style="font-size:8.900px">Document</ui-text><div class="on"><ui-text w="23" style="font-size:8.900px">Block</ui-text></div><ui-icon class="x" name="x" size="10" style="margin-right:4px"></ui-icon></div>
 <div class="card"><ui-icon name="para" size="19"></ui-icon><div><ui-text w="39.500" style="font-size:8.900px;line-height:13px">Paragraph</ui-text><ui-text w="144" style="margin-top:2.500px">Start with the building block of all</ui-text><ui-text w="41">narrative.</ui-text></div></div>
 <panel-head><ui-text w="61">Text Settings</ui-text><ui-icon name="up" size="18"></ui-icon></panel-head>
 <ui-text class="os" w="35" style="font-size:9px;margin:2.500px 0 0 13.500px">Font Size</ui-text>
 <div class="f"><div class="sel"><ui-text w="35">Normal</ui-text><ui-icon name="thin" size="16"></ui-icon></div><div class="in"></div><div class="re"><ui-text w="22">Reset</ui-text></div></div>
 <div class="f" style="margin-top:17.500px;margin-left:12px"><div class="tg"><i></i><b></b></div><ui-text class="os" w="41" style="margin-left:12px">Drop Cap</ui-text></div>
 <ui-text class="os" w="150.500" style="font-style:italic;margin:5px 0 21.500px 12px">Toggle to show a large initial letter.</ui-text>
 <panel-head><ui-text w="67.500">Color Settings</ui-text><ui-icon name="down" size="18"></ui-icon></panel-head>
 <panel-head style="border-bottom:1px solid #e9ebed"><ui-text w="47.500">Advanced</ui-text><ui-icon name="down" size="18"></ui-icon></panel-head>`);

/* Windows taskbar */
define('task-item', `
 :host{display:flex;align-items:center;justify-content:center;width:42.170px;height:34px;flex:none;position:relative}
 :host([sys]){width:40.600px}:host([tray]){width:27px}
 :host([open])::after{content:"";position:absolute;left:4px;right:4px;bottom:0;height:2px;background:#93bdea}
 :host([active]){background:#505558}:host([active])::after{left:0;right:0}`,
 '<div class="i"></div>', (el, root) => putIcon(el, root, 19));

define('task-bar', `
 :host{display:flex;height:34px;background:#262c30;color:#fff}
 .tray{display:flex;margin-left:auto}
 .clock{width:58px;display:flex;flex-direction:column;align-items:center;font-size:10.300px;line-height:15.500px;padding-top:1.500px}
 .n{width:41.500px;padding:9px 0 0 9px;position:relative}
 .n b{position:absolute;left:17px;top:17px;width:13px;height:13px;border-radius:50%;background:#363b3f;border:1px solid #8d9295;font-size:8.500px;line-height:11px;text-align:center}
 .end{width:1px;background:#6b7073;margin-right:3px}`,
 `<task-item sys icon="windows" size="16"></task-item><task-item sys icon="search" size="16"></task-item><task-item sys icon="cortana" size="15"></task-item><task-item sys icon="taskview" size="15"></task-item>
 <div style="width:1.200px"></div><task-item open icon="edge"></task-item><task-item open icon="explorer"></task-item><task-item open icon="store"></task-item><task-item icon="mail" size="20"></task-item><task-item icon="firefox" size="20"></task-item>
 <task-item open icon="bt" size="20"></task-item><task-item open icon="slack" size="20"></task-item><task-item open icon="vscode" size="20"></task-item><task-item open icon="skype" size="20"></task-item><task-item open icon="onenote" size="20"></task-item>
 <task-item open active icon="chrome"></task-item><task-item open icon="word" size="18"></task-item><task-item open icon="acrobat" size="20"></task-item>
 <div class="tray"><task-item tray icon="trayup" size="13"></task-item><task-item tray icon="wifi" size="13"></task-item><task-item tray icon="cloud" size="14"></task-item><task-item tray icon="battery" size="14"></task-item><task-item tray icon="volume" size="14"></task-item><task-item tray icon="dropbox" size="14"></task-item>
 <div class="clock"><ui-text w="37.500">8:34 AM</ui-text><ui-text w="42">2/8/2020</ui-text></div><div class="n"><ui-icon name="note" size="15"></ui-icon><b>8</b></div><div class="end"></div></div>`);

define('desktop-screen', `
 :host{width:1080px;height:614px;overflow:hidden}
 .m{display:flex;height:495px}.e{flex:1;min-width:0}.w{display:flex}`,
 `<tab-strip></tab-strip><address-bar></address-bar><admin-bar></admin-bar>
 <div class="m"><admin-menu></admin-menu><div class="e"><editor-header></editor-header><div class="w"><editor-canvas></editor-canvas><block-settings></block-settings></div></div></div><task-bar></task-bar>`);
</script>
</body>
</html>
